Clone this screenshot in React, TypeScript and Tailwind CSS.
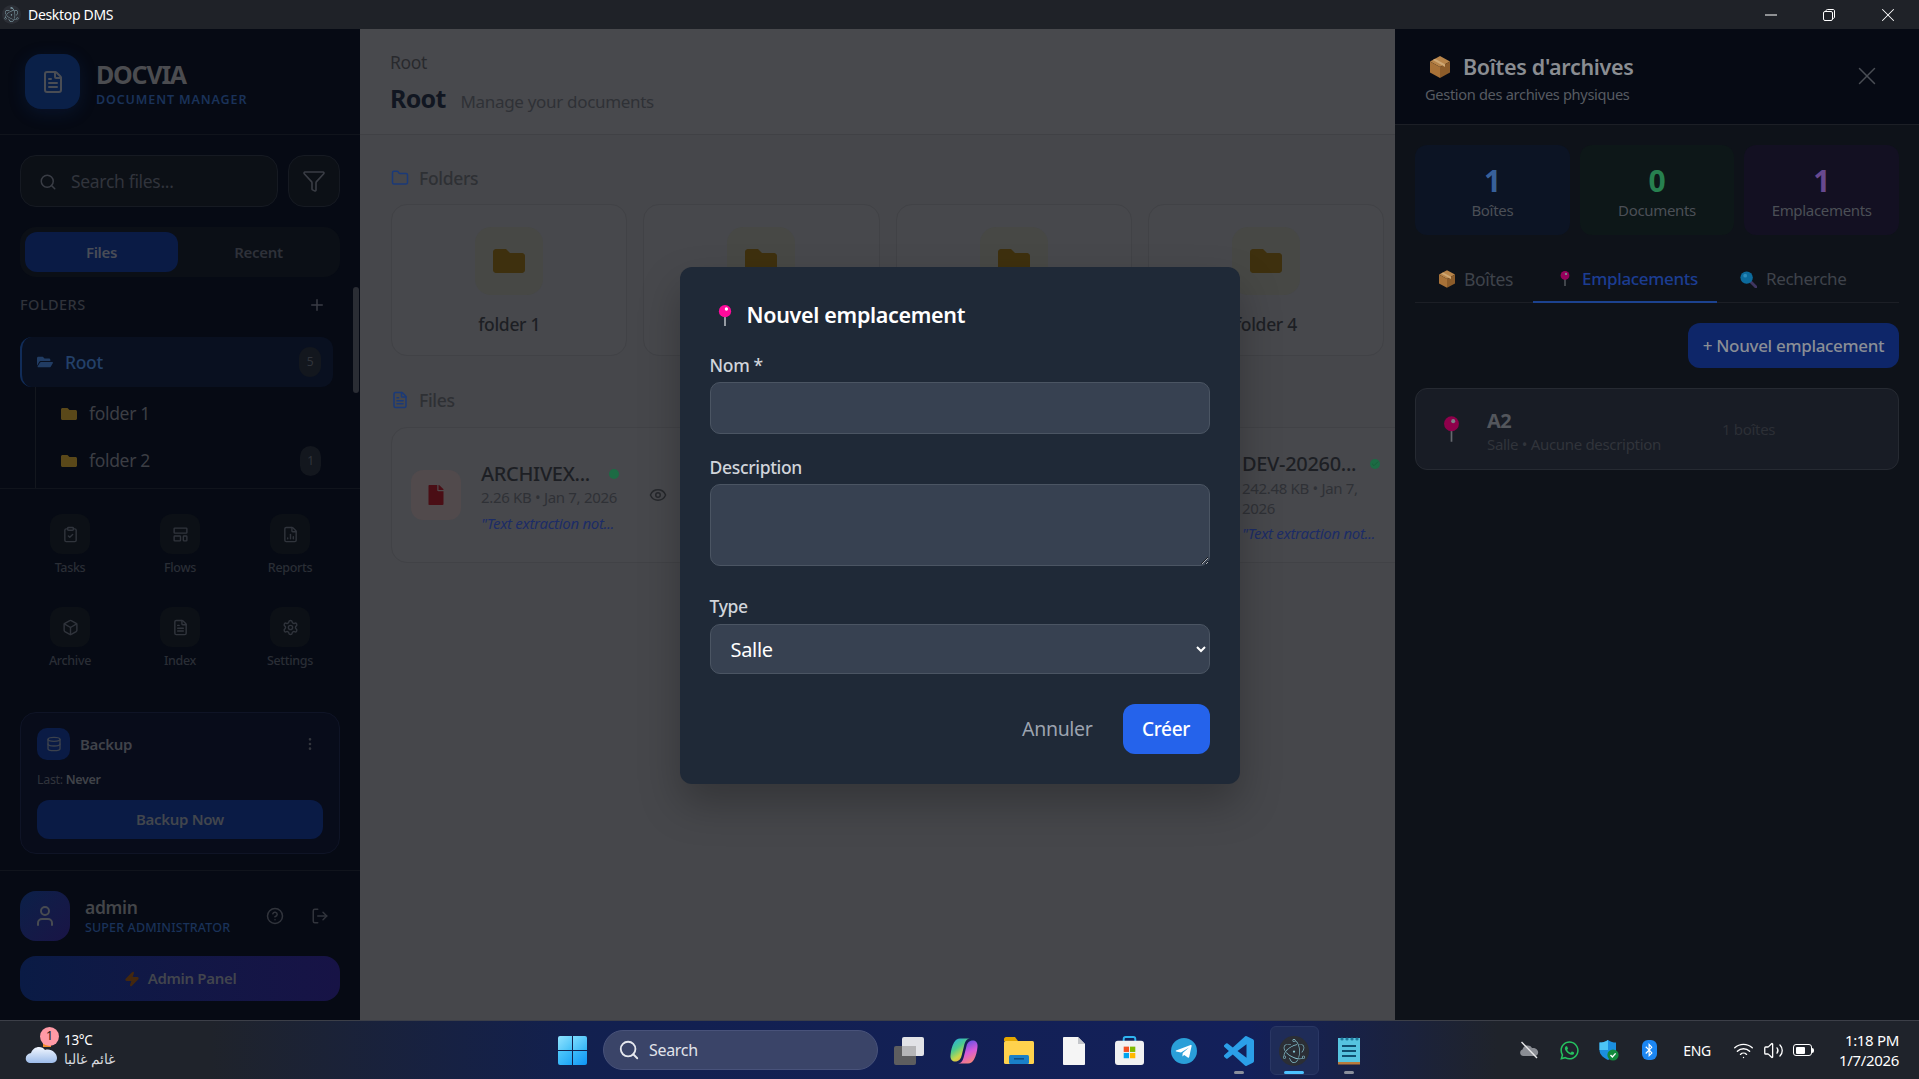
import { Search, Filter, Plus, FileText, ClipboardCheck, LayoutTemplate, FileChartColumn, Box, Settings, Database, EllipsisVertical, User, CircleHelp, LogOut, Zap, Eye, Check, X, Folder, Wifi, Volume2 } from 'lucide-react'
import { FaFolder, FaFolderOpen, FaFile, FaWhatsapp, FaBluetoothB } from 'react-icons/fa'
import { SiElectron } from 'react-icons/si'

function PinEmoji({ className, head = '#ff0a9c', stem = '#c8ccd2', dot = '#ffffff' }: { className: string; head?: string; stem?: string; dot?: string }) {
  return (
    <svg viewBox="0 0 16 24" className={className}>
      <rect x="7.2" y="10" width="1.6" height="14" fill={stem} />
      <circle cx="8" cy="7" r="7" fill={head} />
      <circle cx="9.6" cy="4.6" r="1.9" fill={dot} />
    </svg>
  )
}

function BoxEmoji({ className }: { className: string }) {
  return (
    <svg viewBox="0 0 20 22" className={className}>
      <polygon points="10,0 20,5.5 10,11 0,5.5" fill="#b8854a" />
      <polygon points="0,5.5 10,11 10,22 0,16.5" fill="#a87238" />
      <polygon points="20,5.5 10,11 10,22 20,16.5" fill="#8c5c2a" />
      <polygon points="5,2.8 15,8.2 15,11 12.6,9.6 2.8,4" fill="#cfa874" />
    </svg>
  )
}

function LoupeEmoji({ className }: { className: string }) {
  return (
    <svg viewBox="0 0 18 18" className={className}>
      <line x1="10" y1="10" x2="17" y2="17" stroke="#3f3560" strokeWidth="3" strokeLinecap="round" />
      <circle cx="7" cy="7" r="6.6" fill="#0c6a9c" />
      <circle cx="5.5" cy="5" r="2" fill="#2c8cbc" />
    </svg>
  )
}

function NavItem({ icon, label }: { icon: React.ReactNode; label: string }) {
  return (
    <div className="flex flex-col items-center">
      <div className="w-10 h-10 rounded-xl bg-[#0c1016] flex items-center justify-center text-[#30343c]">{icon}</div>
      <span className="mt-[6px] text-[12.5px] leading-4 font-medium text-[#2a2e36]">{label}</span>
    </div>
  )
}

function Sidebar() {
  return (
    <aside className="relative w-[360px] shrink-0 h-full bg-[#060a14] flex flex-col">
      <div className="h-[106px] shrink-0 border-b border-[#10141c] pl-[25px] pt-[25px] flex">
        <div className="w-[55px] h-[55px] rounded-2xl bg-[#0a2048] flex items-center justify-center shadow-[0_4px_18px_rgba(20,60,140,0.2)]">
          <FileText className="w-6 h-6 text-[#4a4d54]" strokeWidth={2} />
        </div>
        <div className="ml-4 pt-[5px]">
          <div className="text-[25px] leading-[30px] font-bold text-[#4b4c50] tracking-[-0.05em]">DOCVIA</div>
          <div className="text-[12.5px] leading-[15px] mt-[3px] font-semibold tracking-[0.07em] text-[#1a3259]">DOCUMENT MANAGER</div>
        </div>
      </div>

      <div className="h-[354px] shrink-0 border-b border-[#10141c] overflow-hidden px-5 pt-5">
        <div className="flex gap-[10px]">
          <div className="flex-1 h-[52px] rounded-2xl bg-[#0c1016] border border-[#161a22] flex items-center pl-[18px] pt-[1px]">
            <Search className="w-[18px] h-[18px] text-[#3a3d45]" />
            <span className="ml-[14px] text-[17.5px] text-[#31343c]">Search files...</span>
          </div>
          <div className="w-[52px] h-[52px] rounded-2xl bg-[#0c1016] border border-[#161a22] flex items-center justify-center">
            <Filter className="w-6 h-6 text-[#3a3d45]" strokeWidth={1.6} />
          </div>
        </div>

        <div className="mt-5 h-[50px] rounded-2xl bg-[#0b0f16] p-[5px] flex">
          <div className="w-[153px] rounded-xl bg-[#0a1b45] flex items-center justify-center text-[15px] font-semibold text-[#494d57]">Files</div>
          <div className="flex-1 flex items-center justify-center pl-[4px] text-[15px] font-semibold text-[#2e3139]">Recent</div>
        </div>

        <div className="mt-[18px] h-[20px] flex items-center justify-between pr-[14px]">
          <span className="text-[14.5px] font-medium tracking-[0.03em] text-[#30333b]">FOLDERS</span>
          <Plus className="w-[18px] h-[18px] text-[#3a3d45]" />
        </div>

        <div className="mt-[22px] w-[313px] h-[50px] rounded-xl bg-[#091020] border-l-2 border-[#112c58] flex items-center pl-[15px] pr-3">
          <FaFolderOpen className="w-4 h-4 text-[#213c63]" />
          <span className="ml-3 text-[17.5px] font-medium text-[#234069]">Root</span>
          <span className="ml-auto w-[22px] h-[30px] rounded-xl bg-[#13171e] flex items-center justify-center text-[12px] text-[#31343b]">5</span>
        </div>

        <div className="ml-[15px] w-[298px] border-l border-[#13171e] pt-[3px] h-[120px]">
          <div className="h-[47px] flex items-center pl-[25px]">
            <FaFolder className="w-4 h-4 text-[#5a4819]" />
            <span className="ml-3 text-[17.5px] text-[#3c3e44]">folder 1</span>
          </div>
          <div className="h-[47px] flex items-center pl-[25px] pr-3">
            <FaFolder className="w-4 h-4 text-[#5a4819]" />
            <span className="ml-3 text-[17.5px] text-[#3c3e44]">folder 2</span>
            <span className="ml-auto w-[21px] h-[30px] rounded-xl bg-[#13171e] flex items-center justify-center text-[12px] text-[#31343b]">1</span>
          </div>
        </div>
      </div>

      <div className="grid grid-cols-3 gap-y-[31px] px-[15px] pt-[25px] w-[360px]">
        <NavItem icon={<ClipboardCheck className="w-[17px] h-[17px]" />} label="Tasks" />
        <NavItem icon={<LayoutTemplate className="w-[17px] h-[17px]" />} label="Flows" />
        <NavItem icon={<FileChartColumn className="w-[17px] h-[17px]" />} label="Reports" />
        <NavItem icon={<Box className="w-[17px] h-[17px]" />} label="Archive" />
        <NavItem icon={<FileText className="w-[17px] h-[17px]" />} label="Index" />
        <NavItem icon={<Settings className="w-[17px] h-[17px]" />} label="Settings" />
      </div>

      <div className="mt-[43px] mx-5 h-[142px] rounded-2xl bg-[#080c1a] border border-[#0f1426] px-4 pt-[15px]">
        <div className="flex items-center">
          <div className="w-[33px] h-[32px] rounded-[10px] bg-[#0a1b45] flex items-center justify-center">
            <Database className="w-4 h-4 text-[#3c424d]" />
          </div>
          <span className="ml-[10px] text-[15px] font-semibold text-[#40434a]">Backup</span>
          <EllipsisVertical className="ml-auto mr-[5px] w-4 h-4 text-[#33363d]" />
        </div>
        <div className="mt-[11px] text-[12.5px] leading-[17px] text-[#31343c]">Last: <span className="font-semibold text-[#404349]">Never</span></div>
        <div className="mt-[12px] h-[39px] rounded-xl bg-[#0a1b45] flex items-center justify-center text-[15px] font-semibold text-[#42464d]">Backup Now</div>
      </div>

      <div className="mt-4 border-t border-[#10141c] px-5 pt-5">
        <div className="flex items-center h-[50px]">
          <div className="w-[50px] h-[50px] rounded-2xl bg-gradient-to-br from-[#0a2048] to-[#191446] flex items-center justify-center">
            <User className="w-6 h-6 text-[#484b51]" />
          </div>
          <div className="ml-[15px]">
            <div className="text-[17.5px] leading-[22px] font-semibold text-[#434549]">admin</div>
            <div className="text-[12.5px] leading-[16px] mt-[2px] font-medium tracking-[0.01em] text-[#1a3259]">SUPER ADMINISTRATOR</div>
          </div>
          <CircleHelp className="ml-auto w-[18px] h-[18px] text-[#31343c]" />
          <LogOut className="ml-[27px] mr-[11px] w-[18px] h-[18px] text-[#31343c]" />
        </div>
        <div className="mt-[15px] h-[45px] rounded-2xl bg-gradient-to-r from-[#0a1b45] to-[#171346] flex items-center justify-center text-[15px] font-semibold text-[#42454d]">
          <Zap className="w-4 h-4 mr-[8px] text-[#44280f] fill-[#44280f]" />
          Admin Panel
        </div>
      </div>

      <div className="absolute right-[1px] top-[258px] w-[6px] h-[106px] rounded-full bg-[#2a2d34]" />
    </aside>
  )
}

function FolderCard({ name }: { name?: string }) {
  return (
    <div className="h-[152px] rounded-2xl bg-[#47484c] border border-[#414246] flex flex-col items-center pt-[22px]">
      <div className="w-[68px] h-[68px] rounded-2xl bg-[#474845] flex items-center justify-center">
        <FaFolder className="w-8 h-8 text-[#3e300e]" />
      </div>
      {name && <span className="mt-[17px] text-[17.5px] leading-6 font-medium text-[#1d1f24]">{name}</span>}
    </div>
  )
}

function Main() {
  return (
    <main className="flex-1 min-w-0 h-full bg-[#46474b] overflow-hidden">
      <div className="h-[106px] bg-[#48494d] border-b border-[#404145] pl-[30px] pt-[21px]">
        <div className="text-[17.5px] leading-[24px] text-[#28292d]">Root</div>
        <div className="mt-[8px] flex items-baseline">
          <span className="text-[25px] leading-[32px] font-bold text-[#111621] tracking-[-0.03em]">Root</span>
          <span className="ml-[15px] text-[17px] text-[#2f3136]">Manage your documents</span>
        </div>
      </div>

      <div className="pl-[31px] pr-[11px] pt-[31px]">
        <div className="flex items-center h-[24px]">
          <Folder className="w-[18px] h-[18px] text-[#1b3a78]" />
          <span className="ml-[10px] text-[17.5px] font-medium text-[#2e3034]">Folders</span>
        </div>
        <div className="mt-[14px] grid grid-cols-4 gap-4">
          <FolderCard name="folder 1" />
          <FolderCard />
          <FolderCard />
          <FolderCard name="folder 4" />
        </div>

        <div className="mt-[32px] flex items-center h-[24px]">
          <FileText className="w-[18px] h-[18px] text-[#1b3a78]" />
          <span className="ml-[10px] text-[17.5px] font-medium text-[#2e3034]">Files</span>
        </div>

        <div className="mt-[15px] flex gap-4 w-[1100px]">
          <div className="w-[364px] h-[136px] shrink-0 rounded-2xl bg-[#47484c] border border-[#414246] flex items-center pl-[19px]">
            <div className="w-[50px] h-[50px] rounded-xl bg-[#514a4c] flex items-center justify-center">
              <FaFile className="w-[16px] h-[20px] text-[#4a0e15]" />
            </div>
            <div className="ml-[20px] w-[138px] pt-[3px]">
              <div className="flex items-center justify-between">
                <span className="text-[20px] leading-[26px] font-medium text-[#1d1f24]">ARCHIVEX...</span>
                <span className="w-[10px] h-[10px] rounded-full bg-[#1c6b44]" />
              </div>
              <div className="text-[15px] leading-[20px] text-[#2f3136] whitespace-nowrap">2.26 KB • Jan 7, 2026</div>
              <div className="mt-[6px] text-[15px] leading-[20px] italic text-[#1c2c66] whitespace-nowrap">"Text extraction not...</div>
            </div>
            <Eye className="ml-[30px] w-[18px] h-[18px] text-[#26282c]" />
          </div>
          <div className="w-[364px] h-[136px] shrink-0 rounded-2xl bg-[#47484c] border border-[#414246]" />
          <div className="w-[300px] h-[136px] shrink-0 rounded-2xl bg-[#47484c] border border-[#414246] flex items-start pl-[90px] pt-[23px]">
            <div className="w-[138px]">
              <div className="flex items-center justify-between">
                <span className="text-[20px] leading-[26px] font-medium text-[#1d1f24] whitespace-nowrap">DEV-20260...</span>
                <span className="w-[10px] h-[10px] rounded-full bg-[#1c6b44] shrink-0 ml-[6px] flex items-center justify-center"><Check className="w-2 h-2 text-[#165534]" /></span>
              </div>
              <div className="mt-[1px] text-[15px] leading-[20px] text-[#2f3136] w-[120px]">242.48 KB • Jan 7, 2026</div>
              <div className="mt-[5px] text-[15px] leading-[20px] italic text-[#1c2c66] whitespace-nowrap">"Text extraction not...</div>
            </div>
          </div>
        </div>
      </div>
    </main>
  )
}

function Stat({ value, label, bg, color }: { value: string; label: string; bg: string; color: string }) {
  return (
    <div className={`rounded-xl h-[90px] flex flex-col items-center pt-[18px] ${bg}`}>
      <span className={`text-[30px] leading-[36px] font-bold ${color}`}>{value}</span>
      <span className="mt-[1px] text-[15px] leading-[20px] text-[#4b4f56]">{label}</span>
    </div>
  )
}

function ArchivePanel() {
  return (
    <section className="w-[524px] shrink-0 h-full bg-[#0e1219] flex flex-col">
      <div className="h-[96px] shrink-0 bg-[#060a14] border-b border-[#1c1f26] pl-[30px] pr-[37px] pt-[23px] flex justify-between">
        <div>
          <div className="flex items-center">
            <BoxEmoji className="ml-[5px] w-[20px] h-[22px]" />
            <span className="ml-[13px] text-[21.5px] leading-[30px] font-semibold text-[#8a8d92]">Boîtes d'archives</span>
          </div>
          <div className="mt-[2px] text-[14.6px] leading-[20px] text-[#575b62]">Gestion des archives physiques</div>
        </div>
        <X className="mt-[9px] w-[30px] h-[30px] text-[#4a4e55]" strokeWidth={1.2} />
      </div>

      <div className="px-5 pt-5">
        <div className="grid grid-cols-3 gap-[10px]">
          <Stat value="1" label="Boîtes" bg="bg-[#0c1424]" color="text-[#38609a]" />
          <Stat value="0" label="Documents" bg="bg-[#0d1718]" color="text-[#27804f]" />
          <Stat value="1" label="Emplacements" bg="bg-[#131022]" color="text-[#68498f]" />
        </div>

        <div className="mt-[21px] h-[47px] border-b border-[#1c1f26] flex text-[17.5px]">
          <div className="w-[118px] flex items-center pl-[24px] text-[#3f434b]">
            <BoxEmoji className="w-4 h-[18px] mr-[9px]" />
            Boîtes
          </div>
          <div className="w-[184px] flex items-center pl-[27px] font-medium text-[#1c3d92] border-b-2 border-[#1c428f] h-[47px]">
            <PinEmoji className="w-[10px] h-[17px] mr-[12px]" head="#96005c" stem="#74787f" dot="#7c8087" />
            <span className="text-[17px]">Emplacements</span>
          </div>
          <div className="flex items-center pl-[23px] text-[#3f434b]">
            <LoupeEmoji className="w-[17px] h-[17px] mr-[9px]" />
            <span className="text-[17px]">Recherche</span>
          </div>
        </div>

        <div className="mt-[20px] flex justify-end">
          <div className="w-[211px] h-[45px] rounded-xl bg-[#0e2669] flex items-center justify-center text-[17px] font-medium text-[#8a8e96]">+ Nouvel emplacement</div>
        </div>

        <div className="mt-[20px] h-[82px] rounded-xl bg-[#181c25] border border-[#262a32] flex items-center pl-[27px]">
          <PinEmoji className="w-[17px] h-[30px]" head="#8e004b" stem="#65686e" dot="#7c8087" />
          <div className="ml-[27px] w-[235px] pt-[3px]">
            <div className="text-[20px] leading-[26px] font-bold text-[#53565c] tracking-[-0.03em]">A2</div>
            <div className="text-[15px] leading-[20px] text-[#31343b] whitespace-nowrap">Salle • Aucune description</div>
          </div>
          <span className="text-[15px] text-[#2c2f36]">1 boîtes</span>
        </div>
      </div>
    </section>
  )
}

function NewLocationModal() {
  return (
    <div className="absolute inset-0 flex items-center justify-center pt-[2px]">
      <div className="w-[560px] h-[517px] rounded-xl bg-[#1f2937] p-[30px] shadow-[0_20px_40px_rgba(0,0,0,0.25)]">
        <div className="flex items-center h-[36px]">
          <PinEmoji className="ml-[8px] w-[14px] h-[21px]" />
          <h2 className="ml-[15px] text-[21.5px] font-semibold text-white">Nouvel emplacement</h2>
        </div>
        <label className="mt-[20px] block text-[17.5px] leading-[24px] font-medium text-[#d1d5db]">Nom *</label>
        <input className="mt-[5px] block w-full h-[52px] rounded-[10px] bg-[#374151] border border-[#4b5563] outline-none" />
        <label className="mt-[21px] block text-[17.5px] leading-[24px] font-medium text-[#d1d5db]">Description</label>
        <textarea className="mt-[5px] block w-full h-[82px] rounded-[10px] bg-[#374151] border border-[#4b5563] outline-none" />
        <label className="mt-[28px] block text-[17.5px] leading-[24px] font-medium text-[#d1d5db]">Type</label>
        <select defaultValue="Salle" className="mt-[6px] block w-full h-[50px] rounded-[10px] bg-[#374151] border border-[#4b5563] outline-none pl-[16px] pr-[4px] text-[20px] text-white">
          <option>Salle</option>
        </select>
        <div className="mt-[30px] flex justify-end items-center">
          <button className="text-[19.5px] text-[#9ca3af]">Annuler</button>
          <button className="ml-[30px] w-[87px] h-[50px] rounded-xl bg-[#2563eb] text-[19px] font-medium text-white">Créer</button>
        </div>
      </div>
    </div>
  )
}

function TaskIcon({ children, mark }: { children: React.ReactNode; mark?: 'open' | 'active' }) {
  return (
    <div className={`relative w-[49px] h-[49px] flex items-center justify-center rounded-md ${mark === 'active' ? 'bg-[#1f2c58] border border-[#2a3764]' : ''}`}>
      {children}
      {mark === 'open' && <span className="absolute bottom-[1px] w-[10px] h-[3px] rounded-full bg-[#8a8f9c]" />}
      {mark === 'active' && <span className="absolute bottom-[0px] w-[20px] h-[3px] rounded-full bg-[#4cc2ff]" />}
    </div>
  )
}

function Taskbar() {
  return (
    <footer className="relative h-[59px] shrink-0 border-t border-[#3c3f48] [background-image:linear-gradient(90deg,#1f232b_0%,#1f232b_11%,#12204f_30%,#13205a_65%,#1f232b_78%,#1f232b_100%)]">
      <div className="absolute left-[25px] top-0 h-full flex items-center">
        <div className="relative w-[32px] h-[36px]">
          <svg viewBox="0 0 32 24" className="absolute left-0 bottom-[5px] w-[32px] h-[24px]">
            <defs>
              <linearGradient id="cloud" x1="0" y1="0" x2="0" y2="1">
                <stop offset="0" stopColor="#f2f7ff" />
                <stop offset="1" stopColor="#9dbcea" />
              </linearGradient>
            </defs>
            <rect x="18" y="0" width="8" height="8" fill="#f08a2c" />
            <path d="M6 24 C-1 24 -1 15 6 14 C8 7 17 6 20 11 C26 9 32 14 32 19 C32 23 29 24 26 24 Z" fill="url(#cloud)" />
          </svg>
          <span className="absolute right-[-2px] top-[-5px] w-[19px] h-[19px] rounded-full bg-[#ff9aa6] flex items-center justify-center text-[12.5px] text-[#1a1a1a]">1</span>
        </div>
        <div className="ml-[7px] text-white">
          <div className="text-[13.5px] leading-[18px]">13°C</div>
          <div className="text-[14px] leading-[20px] text-[#d5d7dc]" dir="rtl">غائم غالبا</div>
        </div>
      </div>

      <div className="h-full flex items-center justify-center">
        <div className="absolute left-[558px] top-[15px] grid grid-cols-2 gap-[1px] w-[29px]">
          <span className="h-[14px] bg-gradient-to-br from-[#8fe3ff] to-[#3fc0f7] rounded-tl-[2px]" />
          <span className="h-[14px] bg-gradient-to-br from-[#7adcff] to-[#2eb4f5] rounded-tr-[2px]" />
          <span className="h-[14px] bg-gradient-to-br from-[#4fc8fb] to-[#18a4f5] rounded-bl-[2px]" />
          <span className="h-[14px] bg-gradient-to-br from-[#3dbcf9] to-[#0a94f5] rounded-br-[2px]" />
        </div>
        <div className="absolute left-[603px] top-[9px] w-[275px] h-[40px] rounded-full bg-[#3a4468] border border-[#48527a] flex items-center pl-[14px]">
          <Search className="w-[22px] h-[22px] text-[#e6e8ee]" />
          <span className="ml-[9px] text-[16px] text-[#e1e3ea]">Search</span>
        </div>
        <div className="absolute left-[884.5px] top-[5px] flex gap-[6px]">
          <TaskIcon>
            <svg viewBox="0 0 30 28" className="w-[30px] h-[28px]">
              <rect x="0" y="9" width="22" height="19" rx="2" fill="#5d5d5f" />
              <rect x="8" y="0" width="22" height="19" rx="2" fill="#f4f4f4" fillOpacity="0.92" />
              <rect x="8" y="9" width="14" height="10" fill="#b5b5b7" />
            </svg>
          </TaskIcon>
          <TaskIcon>
            <svg viewBox="0 0 28 26" className="w-[28px] h-[26px]">
              <defs>
                <linearGradient id="cpA" x1="0" y1="0" x2="0.6" y2="1">
                  <stop offset="0" stopColor="#1fa8ee" />
                  <stop offset="0.45" stopColor="#4ecb8e" />
                  <stop offset="0.75" stopColor="#c8d84a" />
                  <stop offset="1" stopColor="#f7a83f" />
                </linearGradient>
                <linearGradient id="cpB" x1="0.4" y1="0" x2="0.8" y2="1">
                  <stop offset="0" stopColor="#5a52e8" />
                  <stop offset="0.5" stopColor="#d85ad8" />
                  <stop offset="1" stopColor="#fb8a6a" />
                </linearGradient>
              </defs>
              <path d="M10 0.5 H20 C16 1 15 4 14 8 L11.5 18 C10.5 22 8 23.5 5 23.5 C2 23.5 0 21 0.5 17 C1 12 2 8 4 4.5 C5.5 2 7.5 0.5 10 0.5Z" fill="url(#cpA)" />
              <path d="M18 25.5 H8 C12 25 13 22 14 18 L16.5 8 C17.5 4 20 2.5 23 2.5 C26 2.5 28 5 27.5 9 C27 14 26 18 24 21.5 C22.5 24 20.5 25.5 18 25.5Z" fill="url(#cpB)" />
            </svg>
          </TaskIcon>
          <TaskIcon>
            <svg viewBox="0 0 30 27" className="w-[30px] h-[27px]">
              <path d="M0 2 C0 1 1 0 2 0 H11 L14 4 H0 Z" fill="#e3a600" />
              <rect x="0" y="4" width="30" height="23" rx="1.5" fill="#ffd24d" />
              <rect x="5" y="18" width="20" height="9" rx="1.5" fill="#1a80c8" />
              <rect x="10" y="21" width="10" height="1.6" fill="#0e4f86" />
            </svg>
          </TaskIcon>
          <TaskIcon>
            <svg viewBox="0 0 22 28" className="w-[22px] h-[28px]">
              <path d="M0 1 C0 0.5 0.5 0 1 0 H15 L22 7 V27 C22 27.5 21.5 28 21 28 H1 C0.5 28 0 27.5 0 27 Z" fill="#f5f5f5" />
              <path d="M15 0 L22 7 H15 Z" fill="#c4c6ca" />
            </svg>
          </TaskIcon>
          <TaskIcon>
            <svg viewBox="0 0 30 30" className="w-[29px] h-[29px]">
              <path d="M9 8 V3 C9 1.5 10 1 11 1 H19 C20 1 21 1.5 21 3 V8" fill="none" stroke="#2fb4f0" strokeWidth="2" />
              <rect x="0" y="5" width="30" height="25" rx="3" fill="#f1f1f1" />
              <rect x="9" y="11" width="5.5" height="5.5" fill="#f25022" />
              <rect x="15.5" y="11" width="5.5" height="5.5" fill="#7fba00" />
              <rect x="9" y="17.5" width="5.5" height="5.5" fill="#00a4ef" />
              <rect x="15.5" y="17.5" width="5.5" height="5.5" fill="#ffb900" />
            </svg>
          </TaskIcon>
          <TaskIcon>
            <svg viewBox="0 0 26 26" className="w-[26px] h-[26px]">
              <circle cx="13" cy="13" r="13" fill="#2a9fd8" />
              <path d="M5 12.6 L19.6 7 C20.3 6.8 20.8 7.2 20.6 8 L18.2 19 C18 19.8 17.5 20 16.8 19.6 L13.2 16.9 L11.4 18.6 L11.7 15 L18 9.4 L10 14.4 L5.2 13.6 C4.6 13.4 4.6 12.8 5 12.6Z" fill="#ffffff" />
            </svg>
          </TaskIcon>
          <TaskIcon mark="open">
            <svg viewBox="0 0 24 24" className="w-[30px] h-[30px]">
              <path fill="#2b9fe8" d="M23.15 2.587L18.21.21a1.494 1.494 0 0 0-1.705.29l-9.46 8.63-4.12-3.128a.999.999 0 0 0-1.276.057L.327 7.261A1 1 0 0 0 .326 8.74L3.899 12 .326 15.26a1 1 0 0 0 .001 1.479L1.65 17.94a.999.999 0 0 0 1.276.057l4.12-3.128 9.46 8.63a1.492 1.492 0 0 0 1.704.29l4.942-2.377A1.5 1.5 0 0 0 24 20.06V3.939a1.5 1.5 0 0 0-.85-1.352zm-5.146 14.861L10.826 12l7.178-5.448v10.896z" />
            </svg>
          </TaskIcon>
          <TaskIcon mark="active">
            <div className="w-[30px] h-[30px] rounded-full bg-[#2b2e35] flex items-center justify-center">
              <SiElectron className="w-[24px] h-[24px] text-[#9feaf9]/80" />
            </div>
          </TaskIcon>
          <TaskIcon mark="open">
            <svg viewBox="0 0 22 30" className="w-[22px] h-[30px]">
              <rect x="0" y="2" width="22" height="26" fill="#56c4e0" />
              <rect x="0" y="26" width="22" height="2.5" fill="#b87a3c" />
              <rect x="4" y="9" width="14" height="2" fill="#0f4f70" />
              <rect x="4" y="14" width="14" height="2" fill="#0f4f70" />
              <rect x="4" y="19" width="14" height="2" fill="#0f4f70" />
              <circle cx="4" cy="3" r="1.6" fill="#1f7a9c" />
              <circle cx="9" cy="3" r="1.6" fill="#1f7a9c" />
              <circle cx="14" cy="3" r="1.6" fill="#1f7a9c" />
              <circle cx="19" cy="3" r="1.6" fill="#1f7a9c" />
            </svg>
          </TaskIcon>
        </div>
      </div>

      <div className="absolute left-[1509px] top-0 h-full flex items-center text-white">
        <div className="w-10 flex justify-center">
          <svg viewBox="0 0 20 18" className="w-[20px] h-[18px]">
            <path d="M4.5 15 C0.5 15 0 9.5 3.5 8.5 C4.5 4 11 3 13 7 C17 6.5 20 9.5 19 12.5 C18.5 14.5 17 15 15 15 Z" fill="#8a8d94" />
            <line x1="2.5" y1="1" x2="18" y2="17" stroke="#e8e8ea" strokeWidth="1.4" />
          </svg>
        </div>
        <div className="w-10 flex justify-center">
          <FaWhatsapp className="w-[21px] h-[21px] text-[#25c15f]" />
        </div>
        <div className="w-10 flex justify-center">
          <svg viewBox="0 0 20 21" className="w-[20px] h-[21px]">
            <path d="M9 0 C12 2 14 2.5 17 2.5 V10 C17 15 13 18 9 20 C5 18 0.5 15 0.5 10 V2.5 C4 2.5 6 2 9 0Z" fill="#1b8fe0" />
            <path d="M9 0 C6 2 4 2.5 0.5 2.5 V10 H9 Z" fill="#4cc4f5" />
            <circle cx="14" cy="15" r="5.6" fill="#128a3c" />
            <path d="M11.5 15 L13.4 17 L16.6 13.4" fill="none" stroke="#fff" strokeWidth="1.4" />
          </svg>
        </div>
        <div className="w-10 flex justify-center">
          <div className="w-[15px] h-[20px] rounded-[6px] bg-[#1c86f2] flex items-center justify-center">
            <FaBluetoothB className="w-[12px] h-[14px] text-white" />
          </div>
        </div>
        <span className="w-[56px] text-center text-[14px]">ENG</span>
        <Wifi className="ml-[8px] w-[21px] h-[21px]" strokeWidth={1.6} />
        <Volume2 className="ml-[9px] w-[21px] h-[21px]" strokeWidth={1.5} />
        <div className="ml-[9px] relative w-[19px] h-[12px] border border-white rounded-[3px] flex items-center p-[1.5px]">
          <span className="w-[9px] h-full bg-white rounded-[1px]" />
          <span className="absolute right-[-3px] w-[2px] h-[5px] bg-white rounded-r-sm" />
        </div>
        <div className="w-[87px] text-right text-[15px] leading-[20px]">
          <div>1:18 PM</div>
          <div>1/7/2026</div>
        </div>
      </div>
    </footer>
  )
}

export default function App() {
  return (
    <div className="h-screen w-full overflow-hidden flex flex-col font-['Noto_Sans','Open_Sans',sans-serif] tracking-[-0.02em]">
      <div className="h-[29px] shrink-0 bg-[#1f2228] flex items-center">
        <div className="ml-[2px] w-[19px] h-[19px] rounded-full bg-[#2b2e35] flex items-center justify-center">
          <SiElectron className="w-[15px] h-[15px] text-[#9cc4cf]" />
        </div>
        <span className="ml-[7px] text-[14px] text-white">Desktop DMS</span>
        <div className="ml-auto flex items-center">
          <svg viewBox="0 0 12 12" className="w-3 h-3 text-white"><line x1="0" y1="6" x2="12" y2="6" stroke="currentColor" /></svg>
          <svg viewBox="0 0 12 12" className="ml-[46px] w-3 h-3 text-white">
            <rect x="0.5" y="2.5" width="9" height="9" rx="1.5" fill="none" stroke="currentColor" />
            <path d="M3 2.5 V2 C3 1 3.6 0.5 4.5 0.5 H10 C11 0.5 11.5 1 11.5 2 V8 C11.5 8.8 11 9.3 10 9.5" fill="none" stroke="currentColor" />
          </svg>
          <X className="ml-[42px] mr-[20px] w-[22px] h-[22px] text-white" strokeWidth={1.1} />
        </div>
      </div>

      <div className="relative flex-1 min-h-0 flex">
        <Sidebar />
        <Main />
        <ArchivePanel />
        <NewLocationModal />
      </div>

      <Taskbar />
    </div>
  )
}
